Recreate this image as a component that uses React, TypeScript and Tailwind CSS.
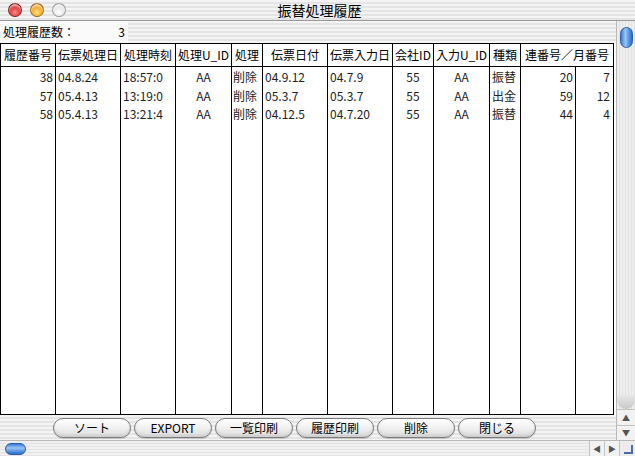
import React from 'react';

// 振替処理履歴ウィンドウ (Aqua風)
type Col = {
  w: string;
  align: string;
  data: string[];
};

const font = "font-['Noto_Sans_CJK_JP','Noto_Sans',sans-serif]";

const headers: { label: string; w: string }[] = [
  { label: '履歴番号', w: 'w-[56px] border-l' },
  { label: '伝票処理日', w: 'w-[65px]' },
  { label: '処理時刻', w: 'w-[55px]' },
  { label: '処理U_ID', w: 'w-[56px]' },
  { label: '処理', w: 'w-[31px]' },
  { label: '伝票日付', w: 'w-[65px]' },
  { label: '伝票入力日', w: 'w-[65px]' },
  { label: '会社ID', w: 'w-[41px]' },
  { label: '入力U_ID', w: 'w-[56px]' },
  { label: '種類', w: 'w-[31px]' },
  { label: '連番号／月番号', w: 'w-[93px]' },
];

const cols: Col[] = [
  { w: 'w-[56px] border-l', align: 'text-right pr-[2px]', data: ['38', '57', '58'] },
  { w: 'w-[65px]', align: 'text-left pl-[2px]', data: ['04.8.24', '05.4.13', '05.4.13'] },
  { w: 'w-[55px]', align: 'text-left pl-[2px]', data: ['18:57:0', '13:19:0', '13:21:4'] },
  { w: 'w-[56px]', align: 'text-center', data: ['AA', 'AA', 'AA'] },
  { w: 'w-[31px]', align: 'text-left pl-[1px]', data: ['削除', '削除', '削除'] },
  { w: 'w-[65px]', align: 'text-left pl-[2px]', data: ['04.9.12', '05.3.7', '04.12.5'] },
  { w: 'w-[65px]', align: 'text-left pl-[2px]', data: ['04.7.9', '05.3.7', '04.7.20'] },
  { w: 'w-[41px]', align: 'text-center', data: ['55', '55', '55'] },
  { w: 'w-[56px]', align: 'text-center', data: ['AA', 'AA', 'AA'] },
  { w: 'w-[31px]', align: 'text-left pl-[2px]', data: ['振替', '出金', '振替'] },
  { w: 'w-[55px]', align: 'text-right pr-[2px]', data: ['20', '59', '44'] },
  { w: 'w-[38px]', align: 'text-right pr-[3px]', data: ['7', '12', '4'] },
];

const buttons = ['ソート', 'EXPORT', '一覧印刷', '履歴印刷', '削除', '閉じる'];

const stripes =
  'bg-[repeating-linear-gradient(180deg,#f4f4f4_0px,#f4f4f4_2px,#e4e4e4_2px,#e4e4e4_4px)]';

function Light({ color }: { color: string }) {
  return (
    <div
      className={`w-[14px] h-[14px] rounded-full border border-black/30 shadow-[inset_0_2px_2px_rgba(255,255,255,0.7)] ${color}`}
    />
  );
}

function TitleBar() {
  return (
    <div
      className={`relative h-[21px] shrink-0 flex items-center border-b border-[#9a9a9a] ${stripes}`}
    >
      <div className="flex items-center gap-[8px] pl-[8px]">
        <Light color="bg-[radial-gradient(circle_at_50%_70%,#ff8a8a,#d42a2a_60%,#8e1010)]" />
        <Light color="bg-[radial-gradient(circle_at_50%_70%,#ffe07a,#f0a020_60%,#a86400)]" />
        <Light color="bg-[radial-gradient(circle_at_50%_70%,#ffffff,#e4e4e4_60%,#c4c4c4)]" />
      </div>
      <div className="absolute inset-0 flex items-center justify-center text-[14px] text-black pl-[4px]">
        振替処理履歴
      </div>
    </div>
  );
}

function Table() {
  return (
    <div className="flex-1 min-h-0 flex flex-col border-y border-black w-[614px]">
      {/* ヘッダ */}
      <div className="flex h-[23px] shrink-0 border-b border-black">
        {headers.map((h) => (
          <div
            key={h.label}
            className={`${h.w} shrink-0 border-r border-black flex items-center justify-center text-[12px] text-black whitespace-nowrap overflow-hidden`}
          >
            {h.label}
          </div>
        ))}
      </div>
      {/* データ */}
      <div className="flex flex-1 min-h-0">
        {cols.map((c, i) => (
          <div key={i} className={`${c.w} shrink-0 border-r border-black pt-[1px]`}>
            {c.data.map((d, j) => (
              <div
                key={j}
                className={`h-[18.5px] leading-[18.5px] text-[12px] text-[#222] whitespace-nowrap overflow-hidden ${c.align}`}
              >
                {d}
              </div>
            ))}
          </div>
        ))}
      </div>
    </div>
  );
}

function ButtonBar() {
  return (
    <div className={`h-[25px] shrink-0 flex items-center pl-[53px] gap-[3px] ${stripes}`}>
      {buttons.map((b) => (
        <button
          key={b}
          className="w-[78px] h-[20px] rounded-full border border-[#7c7c7c] bg-[linear-gradient(180deg,#ffffff_0%,#f2f2f2_45%,#dcdcdc_100%)] shadow-[inset_0_-2px_3px_rgba(0,0,0,0.08),0_1px_1px_rgba(0,0,0,0.15)] text-[12px] leading-none text-black"
        >
          {b}
        </button>
      ))}
    </div>
  );
}

function VScroll() {
  return (
    <div className="w-[19px] shrink-0 flex flex-col border-l border-[#b8b8b8] bg-[repeating-linear-gradient(90deg,#eeeeee_0px,#eeeeee_2px,#e2e2e2_2px,#e2e2e2_3px)]">
      <div className="flex-1 relative">
        <div className="mx-auto mt-[6px] w-[13px] h-[21px] rounded-full border border-[#2a5ea8] bg-[linear-gradient(90deg,#3b7bd6_0%,#9cc6f4_40%,#5b97e4_70%,#2d6cc8_100%)]" />
        <div className="absolute bottom-0 left-0 right-0 h-[14px] rounded-b-full bg-[linear-gradient(180deg,#e8e8e8,#c8c8c8)]" />
      </div>
      <div className="h-[16px] flex items-center justify-center text-[8px] text-[#555] border-t border-[#c4c4c4] bg-[#f2f2f2]">
        ▲
      </div>
      <div className="h-[15px] flex items-center justify-center text-[8px] text-[#555] border-t border-[#c4c4c4] bg-[#f2f2f2]">
        ▼
      </div>
    </div>
  );
}

function HScroll() {
  return (
    <div className="h-[16px] shrink-0 flex border-t border-[#b8b8b8] bg-[repeating-linear-gradient(180deg,#f0f0f0_0px,#f0f0f0_2px,#e4e4e4_2px,#e4e4e4_3px)]">
      <div className="flex-1 flex items-center pl-[5px]">
        <div className="w-[21px] h-[12px] rounded-full border border-[#2a5ea8] bg-[linear-gradient(180deg,#3b7bd6_0%,#9cc6f4_40%,#5b97e4_70%,#2d6cc8_100%)]" />
      </div>
      <div className="w-[15px] flex items-center justify-center text-[8px] text-[#555] border-l border-[#c4c4c4] bg-[#f2f2f2]">
        ◀
      </div>
      <div className="w-[15px] flex items-center justify-center text-[8px] text-[#555] border-l border-[#c4c4c4] bg-[#f2f2f2]">
        ▶
      </div>
      <div className="w-[16px] border-l border-[#c4c4c4] bg-[#ececec] flex items-end justify-end p-[2px]">
        <div className="w-[9px] h-[9px] border-r-2 border-b-2 border-[#4a6fa8]" />
      </div>
    </div>
  );
}

export default function App() {
  return (
    <div className={`w-[635px] h-[456px] flex flex-col overflow-hidden bg-white ${font}`}>
      <TitleBar />
      <div className="flex flex-1 min-h-0">
        <div className="flex-1 min-w-0 flex flex-col bg-white">
          {/* 処理履歴数 */}
          <div className={`h-[22px] shrink-0 flex items-center ${stripes}`}>
            <div className="w-[128px] h-full flex items-center bg-[#fafafa] text-[12px] text-black">
              <span className="pl-[3px] w-[76px]">処理履歴数：</span>
              <span className="flex-1 text-right pr-[3px]">3</span>
            </div>
          </div>
          <Table />
          <ButtonBar />
        </div>
        <VScroll />
      </div>
      <HScroll />
    </div>
  );
}
